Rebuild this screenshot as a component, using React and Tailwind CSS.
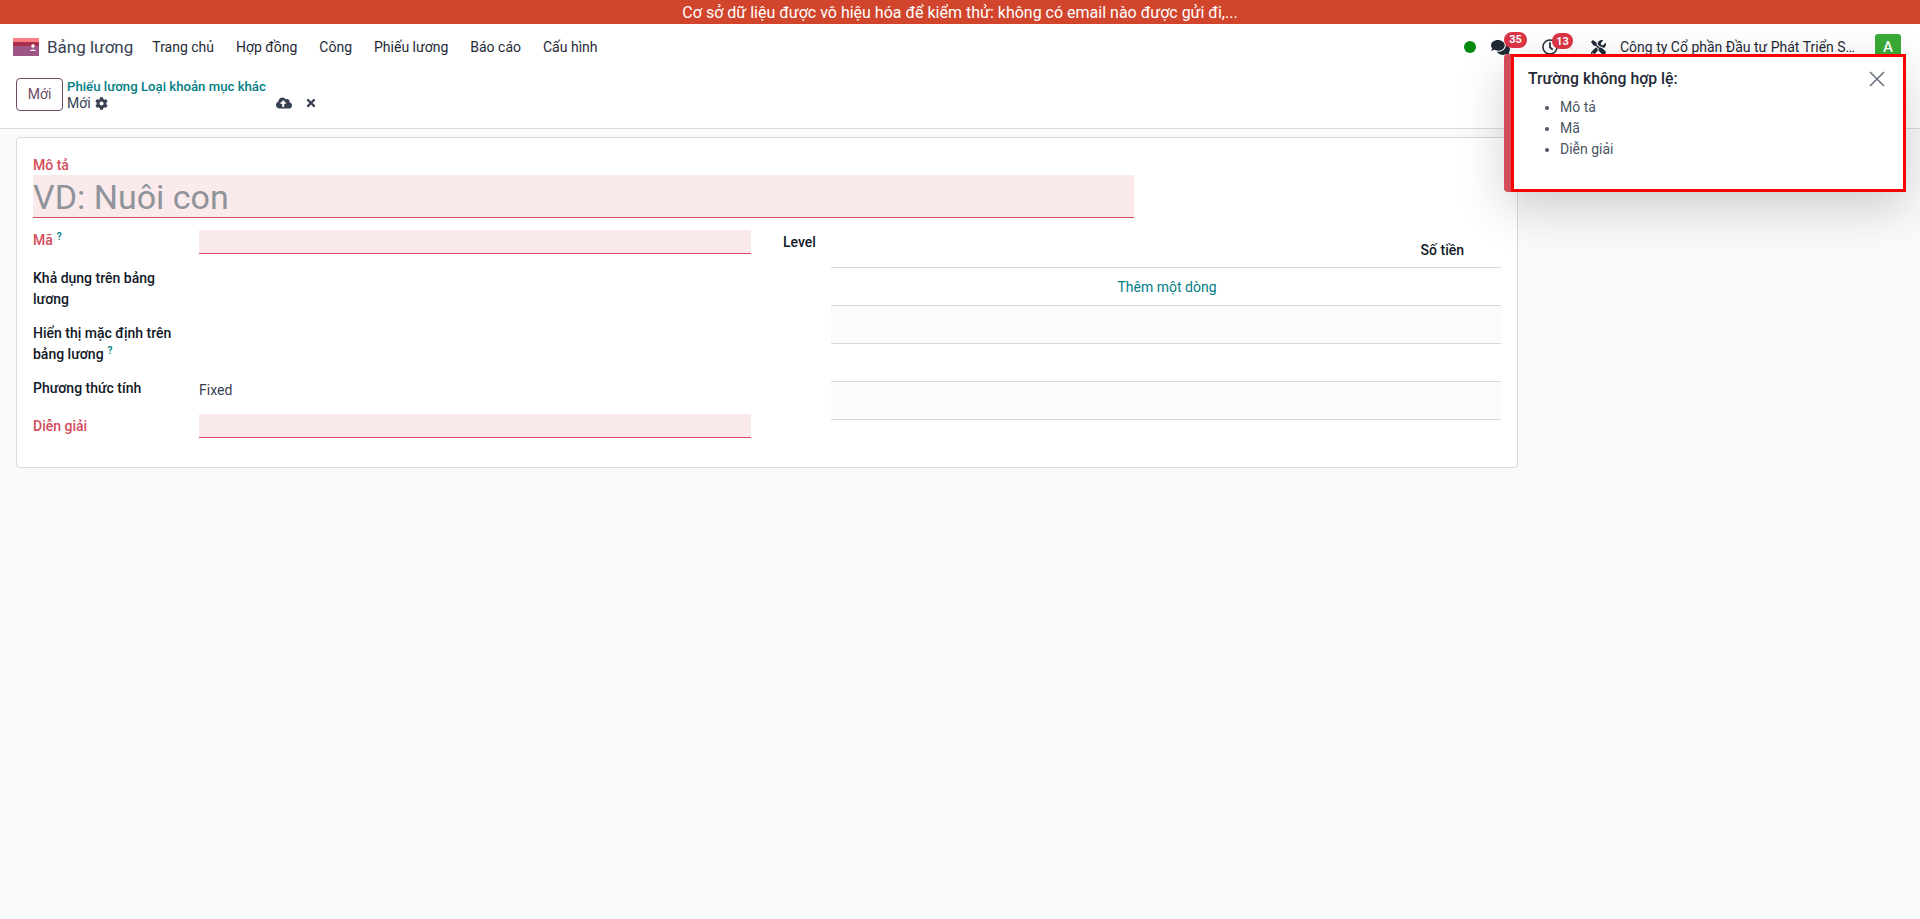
import React from "react";
import { FaComments, FaRegClock, FaTools, FaCloudUploadAlt, FaTimes, FaCog } from "react-icons/fa";

const menu = ["Trang chủ", "Hợp đồng", "Công", "Phiếu lương", "Báo cáo", "Cấu hình"];

function Logo() {
  return (
    <svg width="26" height="18" viewBox="0 0 26 18" className="shrink-0">
      <rect width="26" height="5" y="0" fill="#fb7f85" />
      <rect width="26" height="4" y="4" fill="#a82f4e" />
      <rect width="26" height="10" y="8" fill="#9c5586" />
      <circle cx="20" cy="8" r="1.8" fill="#fff" />
      <path d="M17 13c1-2 5-2 6 0z" fill="#fff" />
    </svg>
  );
}

function Badge({ children, className }) {
  return (
    <span className={`absolute -top-[6px] flex h-4 items-center justify-center rounded-full bg-[#dc3545] text-[11px] font-bold text-white ${className}`}>
      {children}
    </span>
  );
}

function Help() {
  return <sup className="ml-1 text-[10px] font-semibold text-[#017e84]">?</sup>;
}

function Field({ className = "" }) {
  return <div className={`h-6 w-[552px] border-b border-[#d44c59] bg-[#fbeaeb] ${className}`}></div>;
}

export default function App() {
  return (
    <div className="relative flex h-[919px] flex-col overflow-hidden bg-[#f9fafb] font-['Roboto',sans-serif] text-[14px] leading-[21px] text-[#374151]">
      <div className="flex h-6 items-center justify-center bg-[#d0452b] text-[16px] text-white">
        Cơ sở dữ liệu được vô hiệu hóa để kiểm thử: không có email nào được gửi đi,...
      </div>

      <div className="flex h-[46px] items-center bg-white pl-[13px] pr-[19px]">
        <Logo />
        <span className="ml-[8px] mr-[19px] text-[17px]">Bảng lương</span>
        <div className="flex gap-[22px] text-[14px] text-[#1f2937]">
          {menu.map((m) => (
            <span key={m}>{m}</span>
          ))}
        </div>
        <div className="ml-auto flex items-center text-[#1f2937]">
          <span className="mr-[15px] h-3 w-3 rounded-full bg-[#008a0e]"></span>
          <span className="relative mr-[32px]">
            <FaComments size={19} />
            <Badge className="left-[13px] w-[23px]">35</Badge>
          </span>
          <span className="relative mr-[33px]">
            <FaRegClock size={16} />
            <Badge className="left-[10px] w-[21px]">13</Badge>
          </span>
          <FaTools size={15} className="mr-[14px]" />
          <span className="w-[236px] truncate text-[14px]">Công ty Cổ phần Đầu tư Phát Triển Sản xuất</span>
          <span className="ml-[19px] flex h-[26px] w-[26px] items-center justify-center rounded-[3px] bg-[#3aaa35] text-[15px] font-medium text-white">A</span>
        </div>
      </div>

      <div className="flex h-[59px] items-start border-b border-[#d8dadd] bg-white pl-4 pt-2">
        <button className="flex h-[33px] w-[47px] items-center justify-center rounded-[4px] border border-[#714b67] text-[14px] text-[#714b67]">Mới</button>
        <div className="ml-[4px] flex flex-col">
          <span className="text-[13.2px] font-medium leading-[17px] text-[#017e84]">Phiếu lương Loại khoản mục khác</span>
          <div className="flex h-[16px] items-center">
            <span className="text-[14px]">Mới</span>
            <FaCog size={13} className="ml-[4px]" />
            <FaCloudUploadAlt size={16} className="ml-[168px]" />
            <FaTimes size={12} className="ml-[13px]" />
          </div>
        </div>
      </div>

      <div className="ml-4 mt-2 h-[331px] w-[1502px] rounded-[4px] border border-[#d8dadd] bg-white pl-4 pt-[17px]">
        <div className="text-[14px] font-medium leading-[20px] text-[#d44c59]">Mô tả</div>
        <div className="flex h-[43px] w-[1101px] items-center border-b border-[#d44c59] bg-[#fbeaeb] pt-[2px] text-[34px] text-[#8f939a]">VD: Nuôi con</div>

        <div className="mt-3 flex">
          <div className="w-[718px] text-[#111827]">
            <div className="flex h-6">
              <div className="w-[166px] font-medium text-[#d44c59]">Mã<Help /></div>
              <Field />
            </div>
            <div className="mt-[14px] w-[150px] font-medium">Khả dụng trên bảng lương</div>
            <div className="mt-[13px] w-[150px] font-medium">Hiển thị mặc định trên bảng lương<Help /></div>
            <div className="mt-[13px] flex">
              <div className="w-[166px] font-medium">Phương thức tính</div>
              <div className="pt-[2px] text-[14px] text-[#374151]">Fixed</div>
            </div>
            <div className="mt-[13px] flex h-6 items-center">
              <div className="w-[166px] font-medium text-[#d44c59]">Diễn giải</div>
              <Field />
            </div>
          </div>

          <div className="ml-8 w-12 font-medium leading-6 text-[#111827]">Level</div>

          <div className="w-[670px]">
            <div className="flex h-[38px] items-end justify-end border-b border-[#d8dadd] pb-[6px] pr-[37px] font-medium text-[#111827]">Số tiền</div>
            <div className="flex h-[38px] items-center justify-center border-b border-[#d8dadd] pl-[2px] pt-[2px] text-[#017e84]">Thêm một dòng</div>
            <div className="h-[38px] border-b border-[#d8dadd] bg-[#fbfbfb]"></div>
            <div className="h-[38px] border-b border-[#d8dadd]"></div>
            <div className="h-[38px] border-b border-[#d8dadd] bg-[#fbfbfb]"></div>
          </div>
        </div>
      </div>

      {/* notification sits over the page */}
      <div className="absolute left-[1504px] top-[54px] flex h-[138px] w-[402px] rounded-l-[4px] bg-[#d44c59] pl-[7px] shadow-[0_16px_48px_rgba(0,0,0,0.18)]">
        <div className="relative flex-1 border-[3px] border-[#ff0000] bg-white pl-[14px] pt-[11px]">
          <div className="text-[15.75px] font-medium leading-[22px] text-[#1f2937]">Trường không hợp lệ:</div>
          <ul className="mt-[7px] list-disc pl-8 text-[#4b5563]">
            <li>Mô tả</li>
            <li>Mã</li>
            <li>Diễn giải</li>
          </ul>
          <svg width="16" height="16" viewBox="0 0 16 16" className="absolute right-[18px] top-[14px]">
            <path d="M1 1l14 14M15 1L1 15" stroke="#6b7280" strokeWidth="1.6" />
          </svg>
        </div>
      </div>
    </div>
  );
}
